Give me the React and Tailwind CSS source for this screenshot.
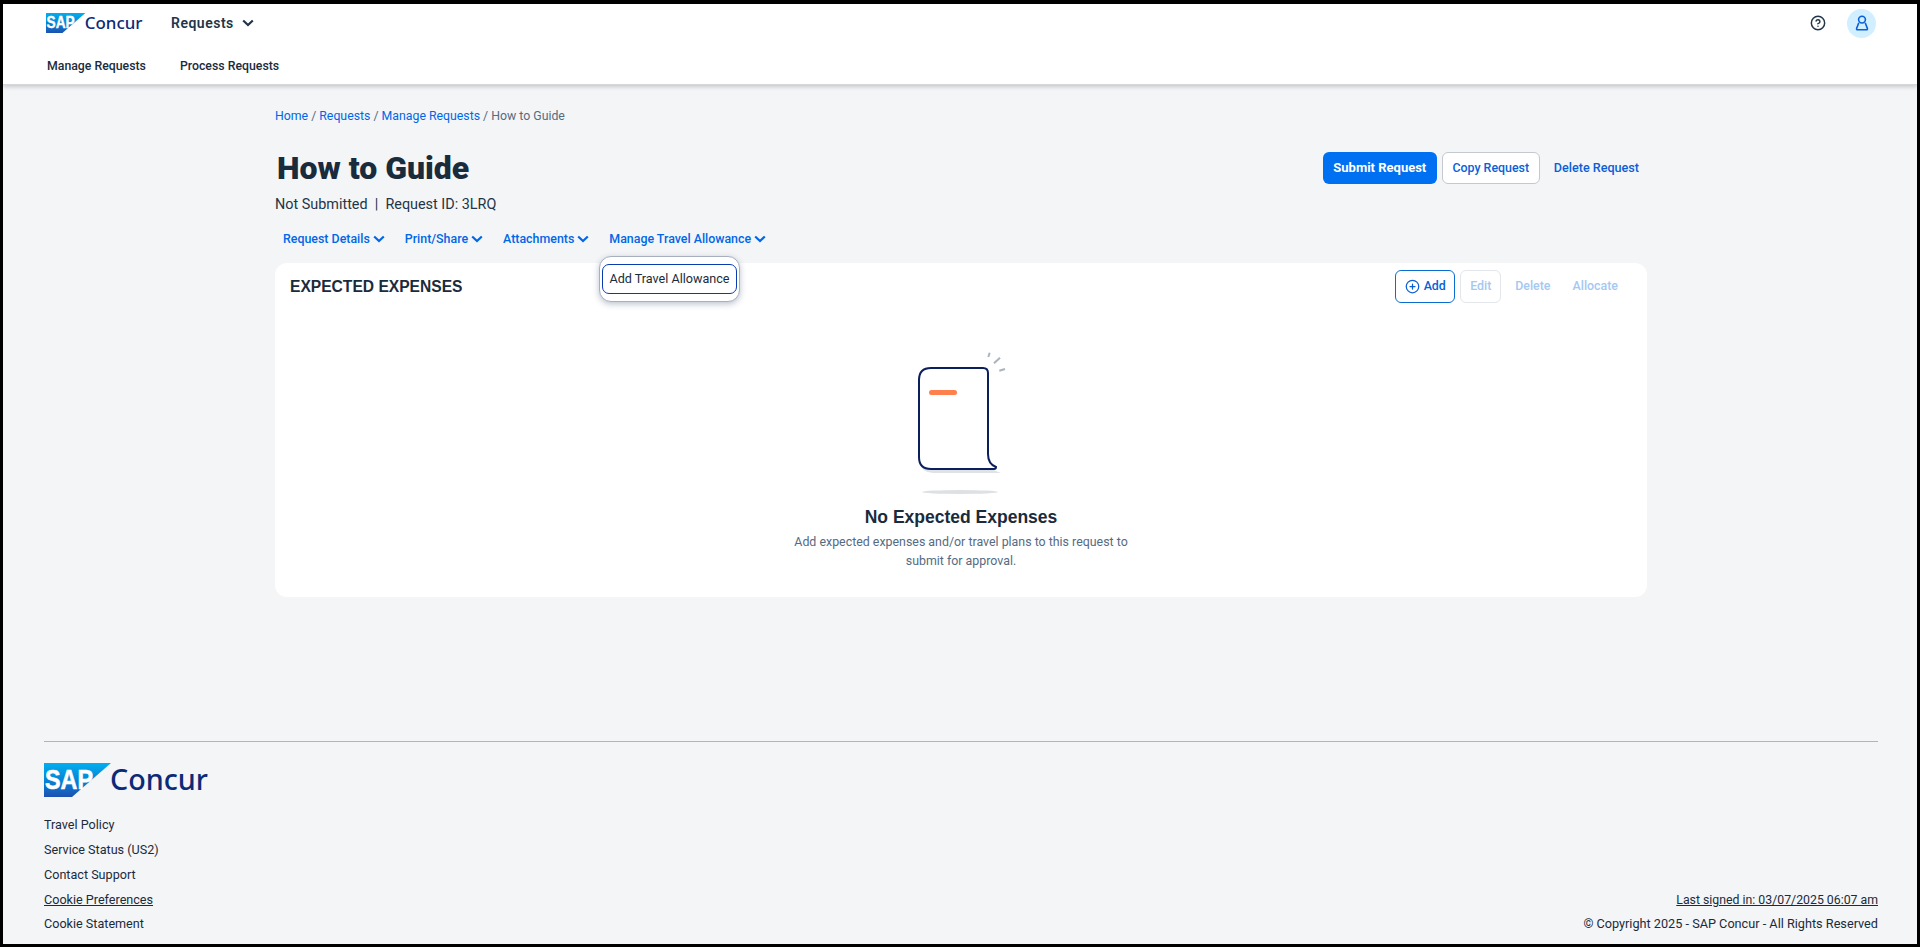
import { CircleHelp, CirclePlus } from 'lucide-react'

function Logo({ className, id }) {
  return (
    <svg viewBox="0 0 165 34" className={`overflow-visible ${className}`}>
      <defs>
        <linearGradient id={id} x1="0" y1="0" x2="0" y2="1">
          <stop offset="0" stopColor="#00aeef" />
          <stop offset="0.6" stopColor="#0a7cd0" />
          <stop offset="1" stopColor="#1e50b0" />
        </linearGradient>
      </defs>
      <polygon points="0,0 67,0 28,34 0,34" fill={`url(#${id})`} />
      <text x="1" y="26" fontFamily="Liberation Sans, sans-serif" fontWeight="700" fontSize="27" fill="#fff" stroke="#fff" strokeWidth="0.6" textLength="48" lengthAdjust="spacingAndGlyphs">SAP</text>
      <text x="66" y="27" fontFamily="Noto Sans, sans-serif" fontWeight="500" fontSize="29" fill="#0b2a78" textLength="98" lengthAdjust="spacingAndGlyphs">Concur</text>
    </svg>
  )
}

function Chevron({ className }) {
  return (
    <svg viewBox="0 0 12 8" className={className} fill="none" stroke="currentColor" strokeWidth="2.2">
      <path d="M1.2 1.5 L6 6 L10.8 1.5" />
    </svg>
  )
}

function MenuLink({ children }) {
  return (
    <button className="flex items-center gap-[3px] text-[12.4px] font-medium text-[#0067e6]">
      {children}
      <Chevron className="w-[12px] h-[8px]" />
    </button>
  )
}

function EmptyDoc() {
  return (
    <svg viewBox="0 0 100 144" className="w-[100px] h-[144px]">
      <path d="M6 100 L6 110 Q9 121 20 121 L88 121 L78 117 Z" fill="#dfe3e6" />
      <ellipse cx="47" cy="140" rx="38" ry="2" fill="#dde1e3" />
      <path d="M18 16 L70 16 Q75 16 75 21 L75 102 Q75 112 83 115 Q83 117 81 117 L18 117 Q6 117 6 105 L6 28 Q6 16 18 16 Z" fill="#fff" stroke="#0b1f5c" strokeWidth="2" />
      <rect x="16" y="38" width="28" height="5" rx="2.5" fill="#ff7f4d" />
      <path d="M76.7 0.7 L75.3 5 M87 5.7 L81 11.3 M92 17 L86.3 18.7" stroke="#a9b4bd" strokeWidth="2" fill="none" />
    </svg>
  )
}

export default function App() {
  return (
    <div className="h-screen flex flex-col bg-[#f4f5f7] border-black border-x-[3px] border-t-4 border-b-[3px] text-[#1a2b3c] font-['Roboto','Liberation_Sans',sans-serif] overflow-hidden">
      {/* Top bar */}
      <header className="bg-white h-[81px] shrink-0 border-b border-[#d5d7da] shadow-[0_2px_4px_rgba(0,0,0,0.18)] pl-[42px] pr-[41px] z-10">
        <div className="flex items-center h-[38px]">
          <Logo id="logo-top" className="w-[99px] h-[20px]" />
          <button className="flex items-center gap-[8px] ml-[27px] text-sm font-semibold tracking-[0.5px] text-[#223548]">
            Requests
            <Chevron className="w-[12px] h-[8px]" />
          </button>
          <div className="ml-auto flex items-center gap-[21px]">
            <CircleHelp className="w-[16px] h-[16px] text-[#223548]" strokeWidth={2.2} />
            <div className="w-[29px] h-[29px] rounded-full bg-[#d1efff] flex items-center justify-center">
              <svg viewBox="0 0 16 16" className="w-[16px] h-[16px]" fill="none" stroke="#0a60d8" strokeWidth="1.6">
                <circle cx="8" cy="4.6" r="3.4" />
                <path d="M4.8 7.8 L2.6 13.4 Q2.4 14.8 3.6 14.8 L12.4 14.8 Q13.6 14.8 13.4 13.4 L11.2 7.8" />
              </svg>
            </div>
          </div>
        </div>
        <nav className="flex gap-[34px] mt-[15px] pl-[2px] text-[12.3px] font-medium text-[#1a2b3c]">
          <a>Manage Requests</a>
          <a>Process Requests</a>
        </nav>
      </header>

      {/* Main */}
      <main className="w-[1372px] ml-[272px] pt-[21px]">
        <div className="text-[12.3px] leading-[20px] text-[#556b82]">
          <a className="text-[#0067e6]">Home</a> / <a className="text-[#0067e6]">Requests</a> / <a className="text-[#0067e6]">Manage Requests</a> / How to Guide
        </div>

        <div className="flex justify-between items-start mt-[26px]">
          <h1 className="text-[32px] leading-[36px] font-black text-[#1a2b3c] pl-[2px] -mt-[2px]">How to Guide</h1>
          <div className="flex items-center mr-[8px]">
            <button className="h-[32px] w-[114px] rounded-md bg-[#0070f2] text-white text-[13px] font-bold">Submit Request</button>
            <button className="h-[32px] w-[98px] ml-[5px] rounded-md bg-white border border-[#c4c8cf] text-[#0a5fd6] text-[12.4px] font-medium">Copy Request</button>
            <button className="ml-[14px] text-[12.6px] font-medium text-[#0a5fd6]">Delete Request</button>
          </div>
        </div>

        <div className="text-[14.4px] leading-[20px] mt-[9px] text-[#223548]">Not Submitted&nbsp; |&nbsp; Request ID: 3LRQ</div>

        <div className="relative flex gap-[20px] pl-[8px] mt-[14px] h-[20px]">
          <MenuLink>Request Details</MenuLink>
          <MenuLink>Print/Share</MenuLink>
          <MenuLink>Attachments</MenuLink>
          <MenuLink>Manage Travel Allowance</MenuLink>
          {/* open dropdown */}
          <div className="absolute z-20 left-[324px] top-[27px] w-[141px] h-[46px] bg-white rounded-[12px] border border-[#a9b0bd] shadow-[0_2px_6px_rgba(30,50,90,0.3)] flex items-center justify-center">
            <div className="w-[135px] h-[30px] rounded-[7px] border-[1.5px] border-[#0a3cb0] flex items-center justify-center text-[12.6px] text-[#1a2b3c]">Add Travel Allowance</div>
          </div>
        </div>

        <section className="mt-[14px] h-[334px] bg-white rounded-[12px] flex flex-col">
          <div className="flex items-center justify-between h-[39px] mt-[4px] pl-[15px] pr-[29px]">
            <h2 className="text-[15.6px] font-bold font-['Liberation_Sans',sans-serif] text-[#1a2b3c]">EXPECTED EXPENSES</h2>
            <div className="flex items-center text-[12.4px] font-medium">
              <button className="h-[33px] w-[60px] rounded-md border border-[#0a6ed1] text-[#0a5fd6] flex items-center justify-center gap-[4px]">
                <CirclePlus className="w-[15px] h-[15px]" strokeWidth={2} />
                Add
              </button>
              <button className="h-[33px] w-[41px] ml-[5px] rounded-md border border-[#e3e6ea] text-[#a5c8f2]">Edit</button>
              <span className="ml-[14px] text-[#a5c8f2]">Delete</span>
              <span className="ml-[22px] text-[#a5c8f2]">Allocate</span>
            </div>
          </div>
          <div className="flex flex-col items-center">
            <div className="mt-[46px] ml-[3px]"><EmptyDoc /></div>
            <h3 className="mt-[8px] text-[17.5px] leading-[26px] font-bold font-['Liberation_Sans',sans-serif] text-[#1a2b3c]">No Expected Expenses</h3>
            <p className="mt-[2px] w-[345px] text-center text-[12.4px] leading-[19px] text-[#556b82]">
              Add expected expenses and/or travel plans to this request to submit for approval.
            </p>
          </div>
        </section>
      </main>

      {/* Footer */}
      <footer className="mt-auto ml-[41px] mr-[39px] mb-[7px] border-t border-[#aeb4c0] pt-[21px]">
        <Logo id="logo-footer" className="w-[165px] h-[34px]" />
        <div className="flex justify-between items-end mt-[16px] text-[12.6px] leading-[24.7px] text-[#1a2b3c]">
          <ul>
            <li>Travel Policy</li>
            <li>Service Status (US2)</li>
            <li>Contact Support</li>
            <li className="underline">Cookie Preferences</li>
            <li>Cookie Statement</li>
          </ul>
          <div className="text-right">
            <div className="underline text-[12.3px]">Last signed in: 03/07/2025 06:07 am</div>
            <div className="text-[12.7px]">© Copyright 2025 - SAP Concur - All Rights Reserved</div>
          </div>
        </div>
      </footer>
    </div>
  )
}
